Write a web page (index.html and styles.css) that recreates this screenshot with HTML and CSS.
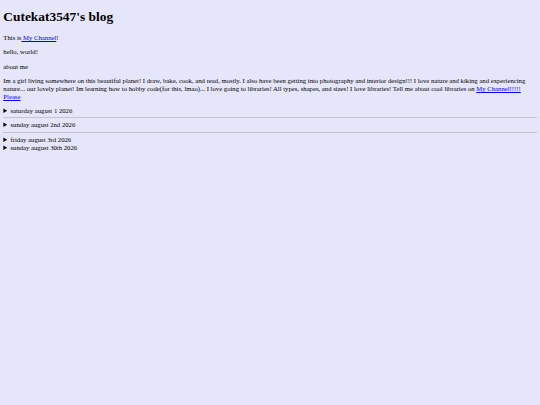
FILE: index.html
```html
<!DOCTYPE html>
<html>
<head>
<meta charset="utf-8">
<title>Cutekat3547's blog</title>
<link rel="stylesheet" href="styles.css">
</head>
<body class="page">
<h1 class="title">Cutekat3547's blog</h1>
<p class="text">This is<a class="link" href="#"> My Channel</a>!</p>
<p class="text">hello, world!</p>
<p class="text">about me</p>
<p class="text last">Im a girl living somewhere on this beautiful planet! I draw, bake, cook, and read, mostly. I also have been getting into photography and interior design!!! I love nature and kiking and experiencing nature... our lovely planet! Im learning how to hobby code(for this, lmao)... I love going to libraries! All types, shapes, and sizes! I love libraries! Tell me about cool libraries on <a class="link" href="#">My Channel!!!!!</a> <a class="link" href="#">Please</a></p>
<details class="entry"><summary>saturday august 1 2026</summary></details>
<hr class="rule">
<details class="entry"><summary>sunday august 2nd 2026</summary></details>
<hr class="rule">
<details class="entry"><summary>friday august 3rd 2026</summary></details>
<details class="entry"><summary>sunday august 30th 2026</summary></details>
</body>
</html>
```
FILE: styles.css
```css
html {
  background: #e6e6fa;
}
.page {
  margin: 3.35px;
  font-family: "Liberation Serif", "Times New Roman", serif;
  font-size: 6.7px;
  line-height: 1.2;
  color: #000;
}
.title {
  font-size: 13.4px;
  font-weight: bold;
  margin: 6px 0 8.6px;
}
.text {
  margin: 6.4px 0;
}
.text.last {
  margin-bottom: 5.4px;
}
.link {
  color: #0000ee;
}
.rule {
  border: 0;
  border-top: 1px solid #c4c4d0;
  margin: 2.7px 0;
}
```
